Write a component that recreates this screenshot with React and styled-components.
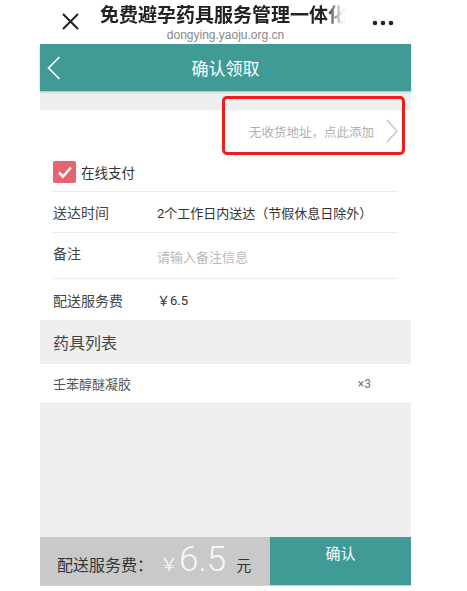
import React from "react";
import styled, { createGlobalStyle } from "styled-components";

const GlobalStyle = createGlobalStyle`
  *, *::before, *::after {
    box-sizing: border-box;
  }
  html, body {
    margin: 0;
    padding: 0;
    background: #fff;
    font-family: Roboto, "Noto Sans CJK SC", sans-serif;
  }
`;

const Phone = styled.div`
  width: 371px;
  height: 591px;
  margin-left: 40px;
  display: flex;
  flex-direction: column;
  background: #fff;
`;

const BrowserBar = styled.div`
  height: 44px;
  background: #fff;
  display: grid;
  grid-template-columns: 60px 245px 1fr;
  align-items: center;
`;

const CloseButton = styled.div`
  display: flex;
  padding-left: 22px;
  padding-bottom: 2px;
`;

const TitleBox = styled.div`
  display: flex;
  flex-direction: column;
  align-items: center;
  overflow: hidden;
`;

const PageTitle = styled.div`
  width: 245px;
  white-space: nowrap;
  overflow: hidden;
  font-size: 19px;
  font-weight: 700;
  line-height: 24px;
  color: #222;
  margin-top: 1px;
  -webkit-mask-image: linear-gradient(to right, #000 226px, rgba(0, 0, 0, 0.06) 242px);
  mask-image: linear-gradient(to right, #000 226px, rgba(0, 0, 0, 0.06) 242px);
`;

const Domain = styled.div`
  font-family: "Liberation Sans", Arial, sans-serif;
  font-size: 12px;
  line-height: 14px;
  color: #888;
  margin-left: 6px;
`;

const MoreButton = styled.div`
  display: flex;
  padding-left: 27px;
  padding-top: 2px;
`;

const Header = styled.div`
  height: 47px;
  background: #409b96;
  box-shadow: 0 1px 2px rgba(0, 0, 0, 0.25);
  display: grid;
  grid-template-columns: 40px 1fr 40px;
  align-items: center;
  position: relative;
  z-index: 1;
`;

const BackButton = styled.div`
  display: flex;
  padding-left: 7px;
`;

const HeaderTitle = styled.div`
  text-align: center;
  color: #fff;
  font-size: 17px;
`;

const Strip = styled.div`
  height: 19px;
  background: #efefef;
`;

const Card = styled.div`
  background: #fff;
  display: flex;
  flex-direction: column;
`;

const AddressRow = styled.div`
  position: relative;
  height: 42px;
  display: flex;
  align-items: center;
  justify-content: flex-end;
  padding-right: 13px;
  gap: 12px;
`;

const AddressText = styled.span`
  font-size: 12.5px;
  color: #b0b0b0;
`;

const Highlight = styled.div`
  position: absolute;
  left: 182px;
  top: -14px;
  width: 183px;
  height: 59px;
  border: 3px solid #f01b1b;
  border-radius: 5px;
`;

const PayRow = styled.div`
  height: 40px;
  margin: 0 13px;
  display: flex;
  align-items: center;
  gap: 5px;
  border-bottom: 1px solid #ebebeb;
`;

const Check = styled.div`
  width: 23px;
  height: 22px;
  border-radius: 2px;
  background: #e5646f;
  display: flex;
  align-items: center;
  justify-content: center;
`;

const PayLabel = styled.span`
  font-size: 13.5px;
  color: #333;
`;

const InfoRow = styled.div`
  height: ${(p) => p.$h}px;
  margin: 0 13px;
  display: grid;
  grid-template-columns: 104px 1fr;
  align-items: center;
  border-bottom: ${(p) => (p.$last ? "none" : "1px solid #ebebeb")};
`;

const Label = styled.span`
  font-size: 14px;
  color: #444;
  padding-bottom: ${(p) => (p.$raised ? 6 : 0)}px;
`;

const Value = styled.span`
  font-size: 13px;
  color: ${(p) => (p.$placeholder ? "#b8b8b8" : "#333")};
  padding-top: ${(p) => (p.$placeholder ? 2 : 0)}px;
`;

const SectionHead = styled.div`
  height: 44px;
  background: #efefef;
  display: flex;
  align-items: center;
  padding-left: 13px;
  font-size: 16px;
  color: #444;
`;

const ItemRow = styled.div`
  height: 40px;
  background: #fff;
  display: flex;
  align-items: center;
  justify-content: space-between;
  padding: 0 40px 0 13px;
  border-bottom: 1px solid #e6e6e6;
`;

const ItemName = styled.span`
  font-size: 13px;
  color: #555;
`;

const Qty = styled.span`
  font-size: 12px;
  color: #777;
`;

const Filler = styled.div`
  flex: 1;
  background: #efefef;
`;

const Footer = styled.div`
  height: 49px;
  display: grid;
  grid-template-columns: 230px 1fr;
  margin-bottom: 5px;
  border-bottom: 1px solid #b9dcd9;
`;

const FeeBox = styled.div`
  background: #c9c9c9;
  display: flex;
  align-items: baseline;
  padding: 8px 0 0 17px;
`;

const FeeLabel = styled.span`
  font-size: 16px;
  color: #333;
`;

const Yen = styled.span`
  font-size: 18px;
  color: #f4f4f4;
  margin-left: 7px;
`;

const Amount = styled.span`
  font-family: Roboto, sans-serif;
  font-size: 35px;
  font-weight: 300;
  line-height: 30px;
  color: #f7f7f7;
  margin-left: 1px;
`;

const Unit = styled.span`
  font-size: 15px;
  color: #333;
  margin-left: 10px;
`;

const ConfirmButton = styled.div`
  background: #409b96;
  color: #fff;
  font-size: 15px;
  display: flex;
  justify-content: center;
  padding: 6px 0 0 0;
  align-items: flex-start;
  line-height: 22px;
`;

const rows = [
  { label: "送达时间", value: "2个工作日内送达（节假休息日除外）", h: 41 },
  { label: "备注", value: "请输入备注信息", h: 46, placeholder: true },
  { label: "配送服务费", value: "￥6.5", h: 41, last: true },
];

const App = () => {
  return (
    <>
      <GlobalStyle />
      <Phone>
        <BrowserBar>
          <CloseButton>
            <svg width="17" height="17" viewBox="0 0 17 17">
              <path d="M1 1 L16 16 M16 1 L1 16" stroke="#222" strokeWidth="2" />
            </svg>
          </CloseButton>
          <TitleBox>
            <PageTitle>免费避孕药具服务管理一体化</PageTitle>
            <Domain>dongying.yaoju.org.cn</Domain>
          </TitleBox>
          <MoreButton>
            <svg width="22" height="6" viewBox="0 0 22 6">
              <circle cx="3" cy="3" r="2.3" fill="#222" />
              <circle cx="11" cy="3" r="2.3" fill="#222" />
              <circle cx="19" cy="3" r="2.3" fill="#222" />
            </svg>
          </MoreButton>
        </BrowserBar>

        <Header>
          <BackButton>
            <svg width="14" height="24" viewBox="0 0 14 24">
              <path d="M12.5 1 L1.5 12 L12.5 23" fill="none" stroke="#fff" strokeWidth="1.6" />
            </svg>
          </BackButton>
          <HeaderTitle>确认领取</HeaderTitle>
        </Header>

        <Strip />

        <Card>
          <AddressRow>
            <AddressText>无收货地址，点此添加</AddressText>
            <svg width="12" height="24" viewBox="0 0 12 24">
              <path d="M1 1 L11 12 L1 23" fill="none" stroke="#c4c4c4" strokeWidth="1.3" />
            </svg>
            <Highlight />
          </AddressRow>
          <PayRow>
            <Check>
              <svg width="16" height="14" viewBox="0 0 16 14">
                <path d="M2 7.5 L6 11.5 L14 2.5" fill="none" stroke="#fff" strokeWidth="2.6" />
              </svg>
            </Check>
            <PayLabel>在线支付</PayLabel>
          </PayRow>
          {rows.map((r) => (
            <InfoRow key={r.label} $h={r.h} $last={r.last}>
              <Label $raised={r.placeholder}>{r.label}</Label>
              <Value $placeholder={r.placeholder}>{r.value}</Value>
            </InfoRow>
          ))}
        </Card>

        <SectionHead>药具列表</SectionHead>
        <ItemRow>
          <ItemName>壬苯醇醚凝胶</ItemName>
          <Qty>×3</Qty>
        </ItemRow>

        <Filler />

        <Footer>
          <FeeBox>
            <FeeLabel>配送服务费：</FeeLabel>
            <Yen>￥</Yen>
            <Amount>6.5</Amount>
            <Unit>元</Unit>
          </FeeBox>
          <ConfirmButton>确认</ConfirmButton>
        </Footer>
      </Phone>
    </>
  );
};

export default App;
